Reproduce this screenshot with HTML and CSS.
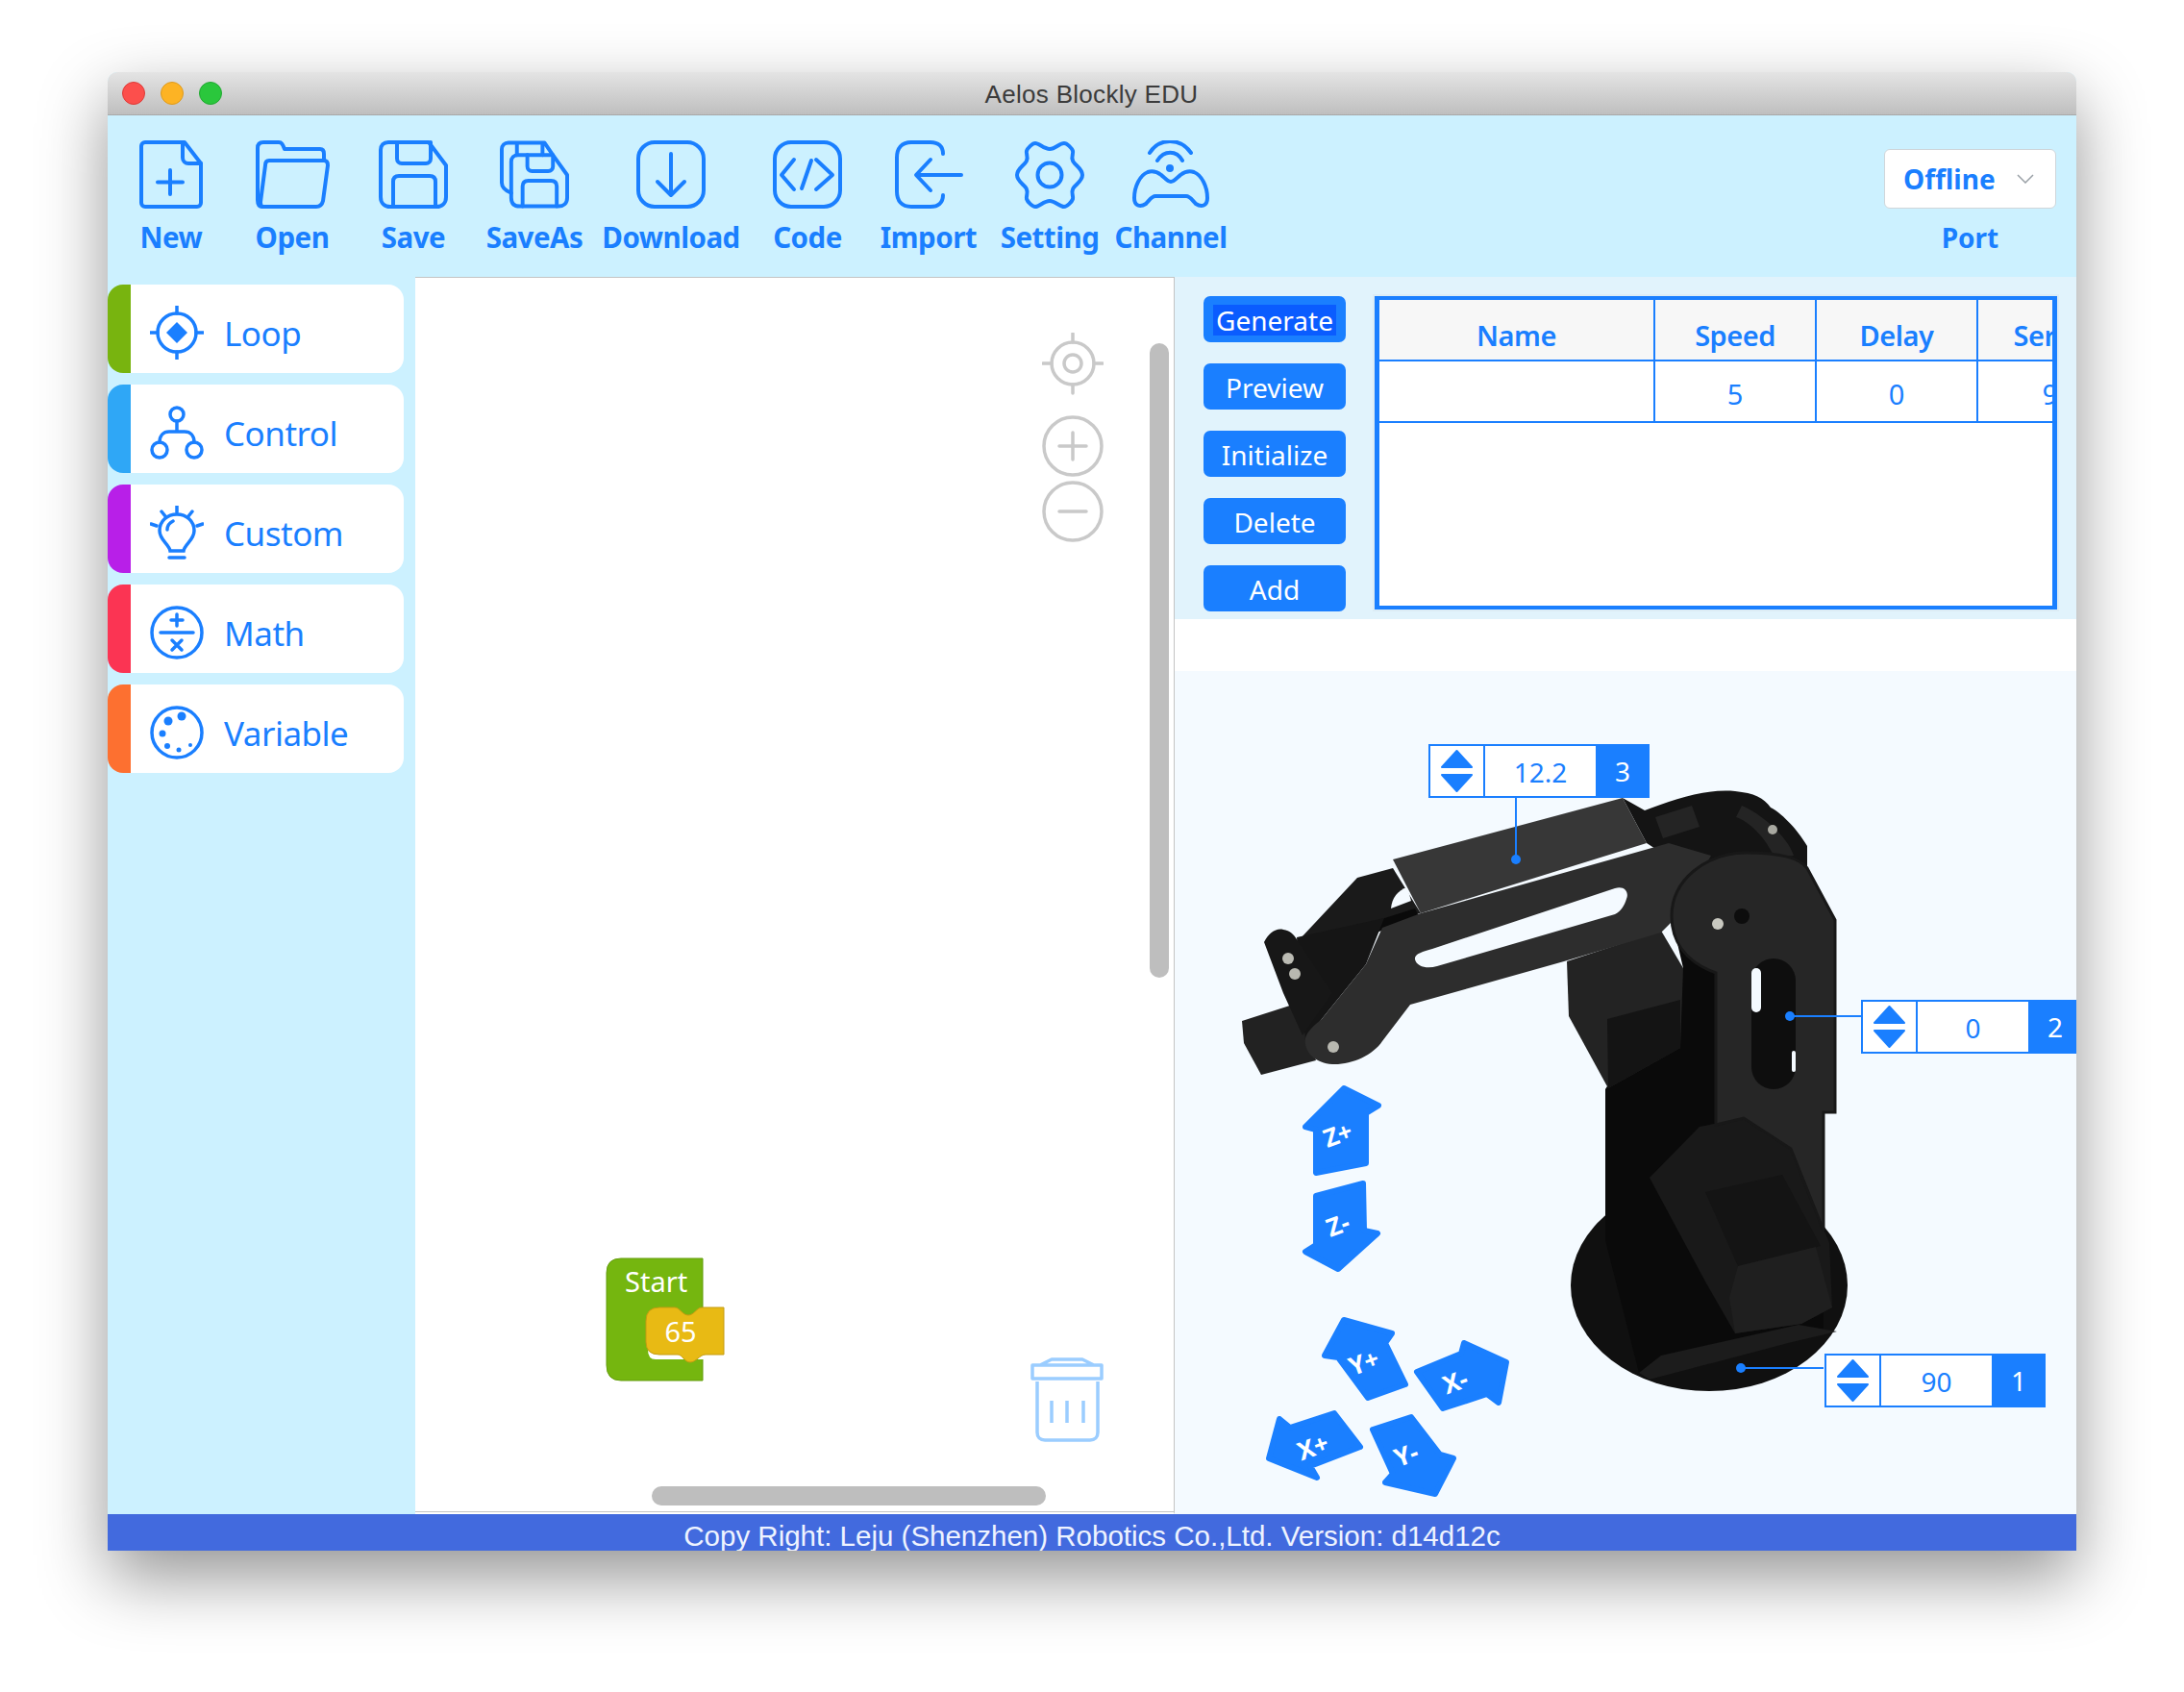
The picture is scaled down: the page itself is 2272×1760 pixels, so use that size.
FILE: index.html
```html
<!DOCTYPE html>
<html lang="en">
<head>
    <meta charset="UTF-8">
    <title>Aelos Blockly EDU</title>
    <link rel="stylesheet" href="styles.css">
</head>
<body>
    <div class="window">
        <header class="titlebar">
            <div class="lights">
                <span class="light red"></span>
                <span class="light orange"></span>
                <span class="light green"></span>
            </div>
            <div class="title">Aelos Blockly EDU</div>
        </header>

        <nav class="toolbar">
            <div class="tools">
                <div class="tool">
                    <svg class="tool-icon" viewBox="0 0 72 71"><path d="M9 2H50L67 24V65a4 4 0 0 1-4 4H9a4 4 0 0 1-4-4V6a4 4 0 0 1 4-4Z"/><path d="M48 3V18a6 6 0 0 0 6 6H67M35 31V56M22 43.500H48"/></svg>
                    <span>New</span>
                </div>
                <div class="tool">
                    <svg class="tool-icon icon-open" viewBox="0 0 77 71"><path d="M7 69C3 69 2 65 2 62V8C2 4 4 2 8 2H24C27 2 28 4 30 9H67C70 9 71 11 71 14V21"/><path d="M14 21H71C74 21 75 23 75 26L70 63C69 67 67 69 63 69H7C6 69 5 67 5 64L10 26C10 23 11 21 14 21Z"/></svg>
                    <span>Open</span>
                </div>
                <div class="tool">
                    <svg class="tool-icon" viewBox="0 0 72 71"><path d="M10 2H52L70 26V59C70 65 66 69 60 69H12C6 69 2 65 2 59V10C2 5 5 2 10 2Z"/><path d="M19 2V19C19 22 21 24 24 24H49C52 24 54 22 54 19V2M15 69V43C15 39 17 37 21 37H53C57 37 59 39 59 43V69"/></svg>
                    <span>Save</span>
                </div>
                <div class="tool">
                    <svg class="tool-icon" viewBox="0 0 73 71"><path d="M19 15H56L71 36V60C71 66 67 69 62 69H21C15 69 12 66 12 60V22C12 18 15 15 19 15Z"/><path d="M12 55C5 52 2 49 2 44V9C2 5 5 2 9 2H47L56 15M18 2V15M45 2V15M29 15V27C29 30 31 32 34 32H51C54 32 56 30 56 27V15M24 69V48C24 44 26 42 30 42H54C58 42 60 44 60 48V69"/></svg>
                    <span>SaveAs</span>
                </div>
                <div class="tool wide">
                    <svg class="tool-icon" viewBox="0 0 72 71"><rect x="2" y="2" width="68" height="67" rx="17"/><path d="M36 14V56M22 43L36 57L50 43"/></svg>
                    <span>Download</span>
                </div>
                <div class="tool">
                    <svg class="tool-icon" viewBox="0 0 72 71"><rect x="2" y="2" width="68" height="67" rx="17"/><path d="M22 20L9 36L22 51M45 20L62 36L45 51M40 21L30 50"/></svg>
                    <span>Code</span>
                </div>
                <div class="tool">
                    <svg class="tool-icon" viewBox="0 0 72 71"><path d="M51 14C51 6 46 2 38 2H18C8 2 3 8 3 18V53C3 63 8 69 18 69H38C46 69 51 65 51 57M70 36H24M38 20L23 36L38 52"/></svg>
                    <span>Import</span>
                </div>
                <div class="tool">
                    <svg class="tool-icon" viewBox="0 0 72 71"><path d="M21 3C25 3 30 9 36 9C42 9 46 3 51 3C54 3 59 8 60 11C61 14 58 17 60 21C61 25 70 29 70 36C70 43 61 47 60 51C58 55 61 58 60 61C59 64 54 69 51 69C46 69 42 63 36 63C30 63 25 69 21 69C18 69 13 64 12 61C11 58 14 55 12 51C11 47 2 43 2 36C2 29 11 25 12 21C14 17 11 14 12 11C13 8 18 3 21 3Z"/><circle cx="36" cy="36" r="12.500"/></svg>
                    <span>Setting</span>
                </div>
                <div class="tool">
                    <svg class="tool-icon icon-channel" viewBox="0 0 80 71"><path d="M14 66C8 70 2 68 2 60C2 48 8 36 16 33C22 31 26 33 30 36C33 38 36 43 40 43C44 43 47 38 50 36C54 33 58 31 64 33C72 36 78 48 78 60C78 68 72 70 66 66C62 62 60 58 56 58H24C20 58 18 62 14 66Z"/><path d="M18 13C28 -3 50 -3 61 13M26 21C33 10 46 10 52 21"/><circle class="dot" cx="39" cy="29" r="4"/></svg>
                    <span>Channel</span>
                </div>
            </div>
            <div class="port">
                <div class="port-select">
                    <span>Offline</span>
                    <svg class="chevron" viewBox="0 0 18 10"><path d="M1 1L9 9L17 1"/></svg>
                </div>
                <div class="port-label">Port</div>
            </div>
        </nav>

        <main class="main">
            <aside class="sidebar">
                <div class="category loop">
                    <svg class="cat-icon" viewBox="0 0 56 56"><circle cx="28" cy="28" r="20"/><path d="M28 0V8M28 48V56M0 28H8M48 28H56"/><path class="solid" d="M28 17L39 28L28 39L17 28Z"/></svg>
                    <span>Loop</span>
                </div>
                <div class="category control">
                    <svg class="cat-icon" viewBox="0 0 56 56"><circle cx="28" cy="9" r="7"/><circle cx="10" cy="46" r="8"/><circle cx="46" cy="46" r="8"/><path d="M28 16V27M10 38C10 31 14 27 20 27H36C42 27 46 31 46 38"/></svg>
                    <span>Control</span>
                </div>
                <div class="category custom">
                    <svg class="cat-icon" viewBox="0 0 56 56"><path d="M21 47C20 40 10 36 10 26C10 16 18 9 28 9C38 9 46 16 46 26C46 36 36 40 35 47Z"/><path d="M20 54H36M28 0V7M12 6L16 11M44 6L40 11M1 19L7 21M55 19L49 21M18 25C18 21 20 18 24 16"/></svg>
                    <span>Custom</span>
                </div>
                <div class="category math">
                    <svg class="cat-icon" viewBox="0 0 56 56"><circle cx="28" cy="28" r="26"/><path d="M11 28H45M28 9V21M22 15H34M23 36L33 46M33 36L23 46"/></svg>
                    <span>Math</span>
                </div>
                <div class="category variable">
                    <svg class="cat-icon" viewBox="0 0 56 56"><circle cx="28" cy="28" r="26"/><circle class="dot" cx="19" cy="16" r="4.500"/><circle class="dot" cx="33" cy="11" r="4.500"/><circle class="dot" cx="13" cy="29" r="3.500"/><circle class="dot" cx="18" cy="42" r="3"/><circle class="dot" cx="30" cy="46" r="2.500"/><circle class="dot" cx="42" cy="41" r="2"/></svg>
                    <span>Variable</span>
                </div>
            </aside>

            <section class="workspace">
                <svg class="canvas-tools" viewBox="0 0 64 218">
                    <circle cx="32" cy="32" r="22"/><circle cx="32" cy="32" r="9"/><path d="M32 1V10M32 54V63M1 32H10M54 32H63"/>
                    <circle cx="32" cy="118" r="30"/><path d="M18 118H46M32 104V132"/>
                    <circle cx="32" cy="186" r="30"/><path d="M18 186H46"/>
                </svg>
                <svg class="start-block" viewBox="0 0 125 130">
                    <path class="block-green" d="M16 1H101V128H16Q1 128 1 112V16Q1 1 16 1Z"/>
                    <path class="block-notch" d="M52 62H102V106H52Q44 106 44 96V72Q44 62 52 62Z"/>
                    <path class="block-yellow" d="M56 52H72C77 52 80 60 86 60C92 60 95 52 100 52H123V101H104C98 101 94 109 88 109C82 109 80 101 75 101H56Q42 101 42 88V66Q42 52 56 52Z"/>
                    <text class="block-text" x="20" y="36">Start</text>
                    <text class="block-text" x="78" y="88" text-anchor="middle">65</text>
                </svg>
                <svg class="trash" viewBox="0 0 76 88">
                    <path d="M2 8H74V22H2ZM10 8L22 2H54L66 8M7 25V78C7 83 10 86 15 86H62C67 86 70 83 70 78V25M22 45V68M38 45V68M55 45V68"/>
                </svg>
                <div class="scroll-v"></div>
                <div class="scroll-h"></div>
            </section>

            <section class="right">
                <div class="program">
                    <div class="actions">
                        <button class="action"><span class="selected">Generate</span></button>
                        <button class="action">Preview</button>
                        <button class="action">Initialize</button>
                        <button class="action">Delete</button>
                        <button class="action">Add</button>
                    </div>
                    <div class="table-wrap">
                        <table class="frames">
                            <thead>
                                <tr><th class="col-name">Name</th><th>Speed</th><th>Delay</th><th>Servo1</th></tr>
                            </thead>
                            <tbody>
                                <tr><td></td><td>5</td><td>0</td><td>90</td></tr>
                            </tbody>
                        </table>
                    </div>
                </div>
                <div class="spacer"></div>
                <div class="robot-view">
                    <svg class="robot" viewBox="1222 698 938 877">
                        <!-- base and body -->
                        <ellipse cx="1778" cy="1337" rx="144" ry="110" fill="#101010"/>
                        <path fill="#0a0a0a" d="M1670 1133L1751 1007L1740 960L1800 960L1785 1013L1897 1150V1385L1716 1435L1705 1428L1670 1290Z"/>
                        <path fill="#1c1c1c" d="M1728 1410L1871 1378L1911 1385L1860 1397L1716 1435L1705 1428Z"/>
                        <path fill="#191919" d="M1716 1225L1768 1172L1814 1163L1863 1195L1903 1293L1906 1360L1874 1377L1805 1387L1774 1333Z"/>
                        <path fill="#141414" d="M1774 1240L1854 1222L1894 1296L1808 1317Z"/>
                        <path fill="#1f1f1f" d="M1808 1317L1889 1297L1906 1360L1874 1377L1805 1387L1799 1350Z"/>
                        <!-- servo under the arm -->
                        <path fill="#232323" d="M1630 1000L1728 968L1751 1007L1748 1090L1673 1132L1632 1057Z"/>
                        <path fill="#141414" d="M1672 1060L1748 1040V1090L1673 1132Z"/>
                        <!-- rear cluster -->
                        <path fill="#141414" d="M1688 830L1711 843C1740 832 1775 820 1805 823C1825 825 1835 830 1842 840C1852 845 1868 860 1880 880V905L1736 892L1713 877Z"/>
                        <path fill="#242424" d="M1722 850L1760 838L1768 860L1730 872Z"/>
                        <path fill="#242424" d="M1812 838C1830 845 1860 870 1866 890L1846 892C1836 870 1820 855 1806 850Z"/>
                        <circle cx="1844" cy="863" r="5" fill="#a8a8a0"/>
                        <!-- rear link of the upper arm -->
                        <path fill="#1a1a1a" d="M1412 913L1449 903L1478 950L1352 977Z"/>
                        <path class="gap" d="M1464 923C1454 926 1448 934 1447 945L1468 937Z"/>
                        <path fill="#0a0a0a" d="M1352 983L1472 945L1476 953L1360 998Z"/>
                        <!-- gripper -->
                        <path fill="#222" d="M1292 1062L1348 1044L1369 1103L1312 1118L1294 1085Z"/>
                        <path fill="#151515" d="M1349 975L1440 955L1421 1003L1375 1060L1358 1082Z"/>
                        <path fill="#171717" d="M1315 980C1320 970 1328 965 1335 967C1342 968 1346 972 1349 977L1386 1033L1355 1077L1335 1033Z"/>
                        <!-- upper arm plate -->
                        <path fill="#2d2d2d" d="M1421 1003L1438 965L1478 950L1736 877L1780 890L1745 953L1728 970L1627 1000L1467 1045L1438 1083C1428 1098 1405 1108 1386 1107C1368 1106 1356 1094 1358 1080C1360 1072 1368 1066 1375 1060Z"/>
                        <path class="gap" d="M1490 987L1680 924C1690 921 1695 928 1692 935C1690 942 1686 948 1680 951L1495 1005C1485 1008 1474 1006 1472 998C1471 992 1480 990 1490 987Z"/>
                        <path fill="#373737" d="M1449 894L1688 830L1713 877L1478 950Z"/>
                        <!-- shoulder plate, lies over the arm -->
                        <path fill="#262626" stroke="#181818" stroke-width="3" d="M1785 1012C1752 1000 1739 978 1739 953C1739 915 1775 887 1817 887C1850 887 1872 892 1880 903L1909 957V1157H1897V1280L1863 1195L1814 1163L1785 1170Z"/>
                        <rect x="1822" y="997" width="46" height="136" rx="23" fill="#0e0e0e"/>
                        <rect class="gap" x="1822" y="1007" width="10" height="46" rx="5"/>
                        <rect class="gap" x="1864" y="1093" width="4" height="22" rx="2"/>
                        <circle cx="1340" cy="997" r="6" fill="#bcbcb4"/>
                        <circle cx="1347" cy="1013" r="6" fill="#b8b8b0"/>
                        <circle cx="1387" cy="1089" r="6" fill="#b8b8b0"/>
                        <circle cx="1787" cy="961" r="6" fill="#c8c8c0"/>
                        <circle cx="1812" cy="953" r="8" fill="#0d0d0d"/>
                        <!-- connectors -->
                        <path class="wire" d="M1577 829V894M1862 1057H1936M1811 1423H1897"/>
                        <circle class="pin" cx="1577" cy="894" r="5"/>
                        <circle class="pin" cx="1862" cy="1057" r="5"/>
                        <circle class="pin" cx="1811" cy="1423" r="5"/>
                        <!-- jog arrows -->
                        <path class="jog" d="M1398 1132L1434 1150L1421 1158L1421 1210L1369 1220L1369 1175L1358 1172Z"/>
                        <text class="jog-text" transform="translate(1395 1189) rotate(-20)" text-anchor="middle">Z+</text>
                        <path class="jog" d="M1418 1231L1369 1244L1369 1295L1358 1302L1392 1320L1433 1283L1419 1280Z"/>
                        <text class="jog-text" transform="translate(1395 1283) rotate(-20)" text-anchor="middle">Z-</text>
                        <path class="jog" d="M1398 1373L1448 1387L1441 1397L1462 1440L1423 1454L1392 1412L1378 1410Z"/>
                        <text class="jog-text" transform="translate(1422 1426) rotate(-20)" text-anchor="middle">Y+</text>
                        <path class="jog" d="M1523 1397L1567 1417L1559 1459L1547 1450L1501 1465L1474 1427L1520 1408Z"/>
                        <text class="jog-text" transform="translate(1517 1446) rotate(-20)" text-anchor="middle">X-</text>
                        <path class="jog" d="M1388 1470L1415 1505L1363 1525L1370 1537L1320 1517L1331 1476L1342 1485Z"/>
                        <text class="jog-text" transform="translate(1369 1514) rotate(-20)" text-anchor="middle">X+</text>
                        <path class="jog" d="M1468 1474L1498 1513L1512 1517L1493 1554L1441 1542L1449 1533L1428 1487Z"/>
                        <text class="jog-text" transform="translate(1466 1522) rotate(-20)" text-anchor="middle">Y-</text>
                    </svg>

                    <div class="joint joint-3">
                        <div class="spinner"><svg viewBox="-2 -2 35 46"><path d="M15.500 0L31 17H0ZM15.500 42L31 25H0Z"/></svg></div>
                        <div class="joint-value">12.2</div>
                        <div class="joint-num">3</div>
                    </div>
                    <div class="joint joint-2">
                        <div class="spinner"><svg viewBox="-2 -2 35 46"><path d="M15.500 0L31 17H0ZM15.500 42L31 25H0Z"/></svg></div>
                        <div class="joint-value">0</div>
                        <div class="joint-num">2</div>
                    </div>
                    <div class="joint joint-1">
                        <div class="spinner"><svg viewBox="-2 -2 35 46"><path d="M15.500 0L31 17H0ZM15.500 42L31 25H0Z"/></svg></div>
                        <div class="joint-value">90</div>
                        <div class="joint-num">1</div>
                    </div>
                </div>
            </section>
        </main>

        <footer class="footer">Copy Right: Leju (Shenzhen) Robotics Co.,Ltd. Version: d14d12c</footer>
    </div>
</body>
</html>
```

FILE: styles.css
```css
html, body {
    margin: 0;
    padding: 0;
    background-color: #fff;
}

body {
    height: 1760px;
    padding: 75px 112px 0;
    box-sizing: border-box;
    overflow: hidden;
    font-family: "Noto Sans", "Open Sans", sans-serif;
}

.window {
    width: 2048px;
    height: 1538px;
    display: flex;
    flex-direction: column;
    border-radius: 10px 10px 0 0;
    overflow: hidden;
    box-shadow: 0 28px 70px rgba(0, 0, 0, 0.42);
    background-color: #ccf1ff;
}

/* title bar */
.titlebar {
    height: 44px;
    flex: none;
    display: flex;
    align-items: center;
    position: relative;
    background: linear-gradient(#e4e4e4, #bfbfbf);
    border-bottom: 1px solid #a8a8a8;
}

.lights {
    display: flex;
    gap: 16px;
    padding-left: 15px;
}

.light {
    width: 24px;
    height: 24px;
    border-radius: 50%;
    box-sizing: border-box;
}

.light.red { background-color: #fc4f4c; border: 1px solid #dd3b38; }
.light.orange { background-color: #fdb324; border: 1px solid #dd9a1e; }
.light.green { background-color: #2ac73c; border: 1px solid #22a832; }

.title {
    flex: 1;
    text-align: center;
    margin-left: -120px;
    padding-top: 2px;
    font-family: "Liberation Sans", sans-serif;
    font-size: 26px;
    letter-spacing: 0.3px;
    color: #3b3b3b;
}

/* toolbar */
.toolbar {
    height: 168px;
    flex: none;
    display: flex;
    justify-content: space-between;
    padding-left: 3px;
    padding-right: 21px;
    box-sizing: border-box;
}

.tools {
    display: flex;
    padding-top: 26px;
}

.tool {
    width: 126px;
    display: flex;
    flex-direction: column;
    align-items: center;
    font-size: 29.500px;
    font-weight: 700;
    letter-spacing: -0.5px;
    color: #1a7fff;
}

.tool.wide {
    width: 158px;
}

.tool span {
    margin-top: 10px;
    line-height: 40px;
}

.tool-icon {
    width: 72px;
    height: 71px;
    fill: none;
    stroke: #1a7fff;
    stroke-width: 4;
    stroke-linecap: round;
    stroke-linejoin: round;
}

.tool-icon.icon-open {
    width: 77px;
}

.tool-icon.icon-channel {
    width: 80px;
}

.tool-icon .dot {
    fill: #1a7fff;
    stroke: none;
}

.port {
    width: 179px;
    padding-top: 35px;
    text-align: center;
    color: #1a7fff;
    font-size: 28px;
    font-weight: 700;
}

.port-select {
    height: 62px;
    display: flex;
    align-items: center;
    justify-content: space-between;
    padding: 0 22px 0 19px;
    box-sizing: border-box;
    background-color: #fff;
    border: 1px solid #cfd6da;
    border-radius: 6px;
}

.chevron {
    width: 18px;
    height: 10px;
    fill: none;
    stroke: #9aa0a6;
    stroke-width: 1.500;
}

.port-label {
    margin-top: 10px;
    line-height: 40px;
}

/* main area */
.main {
    flex: 1;
    display: grid;
    grid-template-columns: 320px 790px 938px;
    min-height: 0;
}

.sidebar {
    display: flex;
    flex-direction: column;
    gap: 12px;
    padding-top: 8px;
}

.category {
    width: 308px;
    height: 92px;
    display: flex;
    align-items: center;
    gap: 21px;
    padding: 8px 0 0 20px;
    box-sizing: border-box;
    background-color: #fff;
    border-radius: 16px;
    border-left: 24px solid;
    color: #1a7fff;
    font-size: 35px;
    letter-spacing: -0.5px;
}

.category.loop { border-left-color: #78b40f; }
.category.control { border-left-color: #2fa7f6; }
.category.custom { border-left-color: #b81fe8; }
.category.math { border-left-color: #fb3453; }
.category.variable { border-left-color: #fd7030; }

.cat-icon {
    width: 56px;
    height: 56px;
    flex: none;
    fill: none;
    stroke: #1a7fff;
    stroke-width: 3.500;
    stroke-linecap: round;
}

.cat-icon .solid,
.cat-icon .dot {
    fill: #1a7fff;
    stroke: none;
}

.workspace {
    position: relative;
    background-color: #fff;
    border-top: 1px solid #c4c4c4;
    border-right: 1px solid #c4c4c4;
    border-bottom: 2px solid #fff;
    box-shadow: inset 0 -1px 0 #c4c4c4;
    box-sizing: border-box;
    overflow: hidden;
}

.canvas-tools {
    position: absolute;
    left: 652px;
    top: 57px;
    width: 64px;
    height: 218px;
    fill: none;
    stroke: #c9c9c9;
    stroke-width: 3.500;
    stroke-linecap: round;
}

.start-block {
    position: absolute;
    left: 198px;
    top: 1019px;
    width: 125px;
    height: 130px;
}

.block-green {
    fill: #75b60f;
    stroke: #639c0b;
    stroke-width: 1;
}

.block-notch {
    fill: #fff;
}

.block-yellow {
    fill: #e8ba14;
    stroke: #c49b10;
    stroke-width: 1;
}

.block-text {
    fill: #fff;
    font-size: 29px;
}

.trash {
    position: absolute;
    left: 640px;
    top: 1123px;
    width: 76px;
    height: 88px;
    fill: none;
    stroke: #9bcdff;
    stroke-width: 3.500;
    stroke-linejoin: round;
}

.scroll-v {
    position: absolute;
    left: 764px;
    top: 68px;
    width: 20px;
    height: 660px;
    border-radius: 10px;
    background-color: #bebebe;
}

.scroll-h {
    position: absolute;
    left: 246px;
    top: 1257px;
    width: 410px;
    height: 20px;
    border-radius: 10px;
    background-color: #bebebe;
}

/* right column */
.right {
    display: flex;
    flex-direction: column;
    min-height: 0;
}

.program {
    height: 356px;
    flex: none;
    display: flex;
    gap: 30px;
    padding: 20px 0 0 30px;
    box-sizing: border-box;
    background-color: #e1f3fc;
}

.actions {
    width: 148px;
    display: flex;
    flex-direction: column;
    gap: 22px;
}

.action {
    height: 48px;
    padding: 2px 0 0;
    border: none;
    border-radius: 7px;
    background-color: #1a7fff;
    color: #fff;
    font-family: inherit;
    font-size: 28px;
    line-height: 1;
}

.selected {
    display: inline-block;
    padding: 2px 3px;
    background-color: #0a5cff;
}

.table-wrap {
    width: 710px;
    height: 326px;
    box-sizing: border-box;
    border-style: solid;
    border-color: #1a7fff;
    border-width: 4px 5px;
    background-color: #fff;
    overflow: hidden;
    box-shadow: 0 0 0 2px #dcecf5;
}

.frames {
    border-collapse: collapse;
    table-layout: fixed;
    width: 790px;
    color: #1a7fff;
    font-size: 29px;
}

.frames th,
.frames td {
    width: 168px;
    text-align: center;
    padding: 0;
    border: 2px solid #1a7fff;
}

.frames th {
    height: 63px;
    padding-top: 10px;
    box-sizing: border-box;
    background-color: #f7f7f7;
    font-weight: 600;
    letter-spacing: -0.5px;
    border-top: none;
}

.frames td {
    height: 64px;
    padding-top: 4px;
    box-sizing: border-box;
}

.frames .col-name {
    width: 286px;
}

.frames th:first-child,
.frames td:first-child {
    border-left: none;
}

.spacer {
    height: 54px;
    flex: none;
    background-color: #fff;
}

.robot-view {
    flex: 1;
    position: relative;
    overflow: hidden;
    background-color: #f4faff;
}

.robot {
    position: absolute;
    left: 0;
    top: 0;
    width: 938px;
    height: 877px;
}

.robot .gap {
    fill: #f4faff;
}

.wire {
    fill: none;
    stroke: #1a7fff;
    stroke-width: 2;
}

.pin {
    fill: #1a7fff;
}

.jog {
    fill: #1a7fff;
    stroke: #1a7fff;
    stroke-width: 6;
    stroke-linejoin: round;
}

.jog-text {
    fill: #fff;
    font-size: 26px;
    font-weight: 700;
}

.joint {
    position: absolute;
    height: 56px;
    display: flex;
    color: #1a7fff;
    font-size: 28px;
}

.joint-3 { left: 264px; top: 76px; }
.joint-2 { left: 714px; top: 342px; }
.joint-1 { left: 676px; top: 710px; }

.spinner {
    width: 59px;
    display: flex;
    align-items: center;
    justify-content: center;
    box-sizing: border-box;
    border: 2px solid #1a7fff;
    background-color: #fff;
}

.spinner svg {
    width: 35px;
    height: 46px;
    fill: #1a7fff;
    stroke: #1a7fff;
    stroke-width: 2;
    stroke-linejoin: round;
}

.joint-value {
    width: 115px;
    display: flex;
    align-items: center;
    justify-content: center;
    padding-top: 2px;
    box-sizing: border-box;
    border-top: 2px solid #1a7fff;
    border-bottom: 2px solid #1a7fff;
    background-color: #fff;
}

.joint-num {
    width: 56px;
    display: flex;
    align-items: center;
    justify-content: center;
    background-color: #1a7fff;
    color: #fff;
}

.footer {
    height: 38px;
    flex: none;
    overflow: hidden;
    text-align: center;
    line-height: 45px;
    background-color: #426ade;
    color: #eef3ff;
    font-family: "Liberation Sans", sans-serif;
    font-size: 29.500px;
}
```
